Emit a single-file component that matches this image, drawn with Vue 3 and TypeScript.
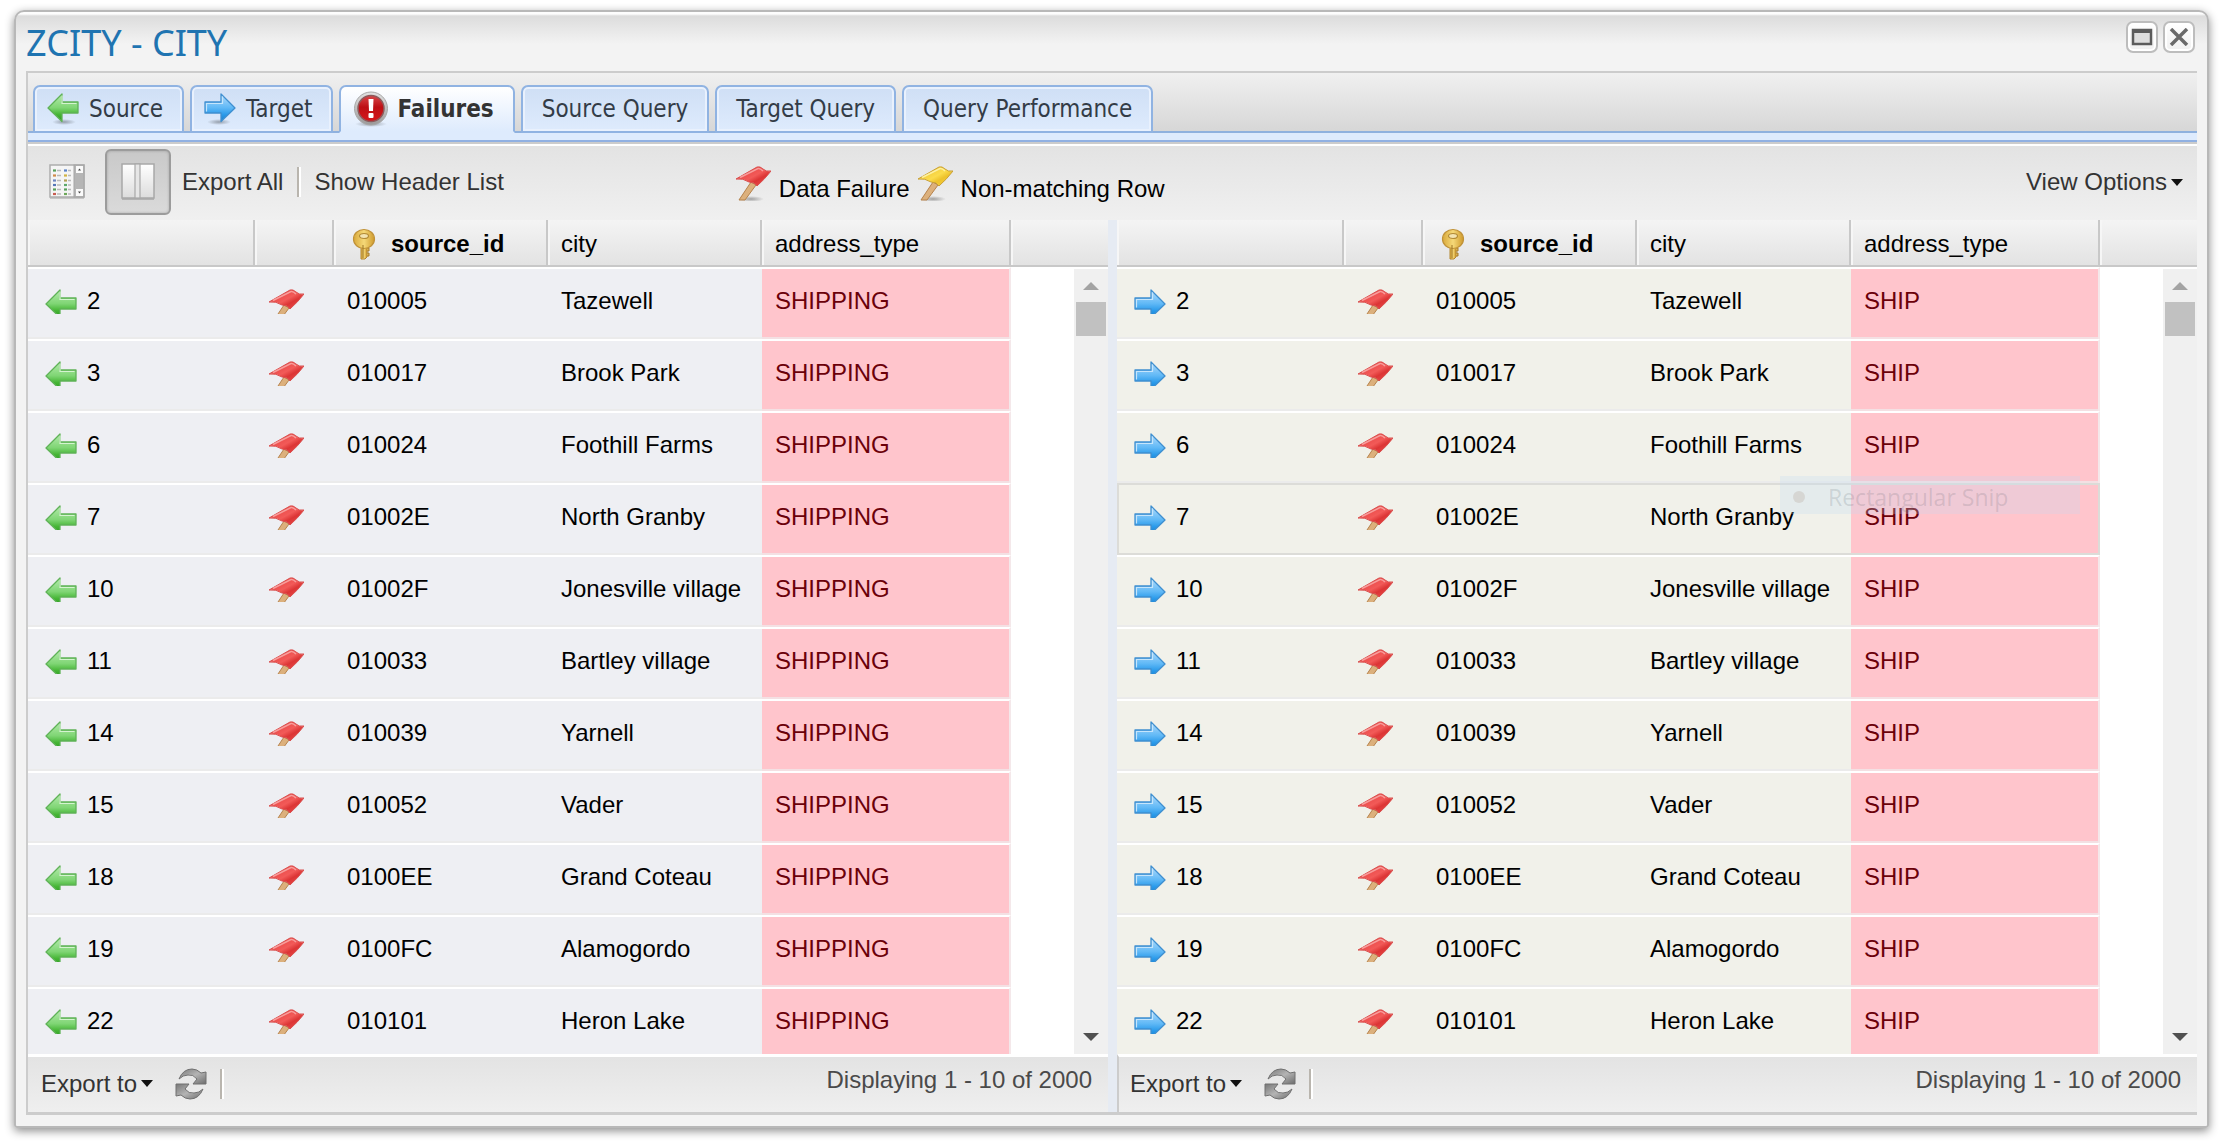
<script setup lang="ts">
import { ref } from 'vue'

interface Tab {
  label: string
  icon?: string
}

interface Row {
  line: number
  id: string
  city: string
}

interface Side {
  key: 'source' | 'target'
  icon: string
  addressType: string
}

const tabs: Tab[] = [
  { label: 'Source', icon: 'arrow-left' },
  { label: 'Target', icon: 'arrow-right' },
  { label: 'Failures', icon: 'alert' },
  { label: 'Source Query' },
  { label: 'Target Query' },
  { label: 'Query Performance' },
]
const activeTab = ref('Failures')

const rows: Row[] = [
  { line: 2, id: '010005', city: 'Tazewell' },
  { line: 3, id: '010017', city: 'Brook Park' },
  { line: 6, id: '010024', city: 'Foothill Farms' },
  { line: 7, id: '01002E', city: 'North Granby' },
  { line: 10, id: '01002F', city: 'Jonesville village' },
  { line: 11, id: '010033', city: 'Bartley village' },
  { line: 14, id: '010039', city: 'Yarnell' },
  { line: 15, id: '010052', city: 'Vader' },
  { line: 18, id: '0100EE', city: 'Grand Coteau' },
  { line: 19, id: '0100FC', city: 'Alamogordo' },
  { line: 22, id: '010101', city: 'Heron Lake' },
]

const sides: Side[] = [
  { key: 'source', icon: 'arrow-left', addressType: 'SHIPPING' },
  { key: 'target', icon: 'arrow-right', addressType: 'SHIP' },
]

const focused = { side: 'target', line: 7 }
</script>

<template>
  <svg class="defs" aria-hidden="true">
    <defs>
      <linearGradient id="g-green" x1="0" y1="0" x2="0" y2="1">
        <stop offset="0" stop-color="#b5ebad" />
        <stop offset="0.5" stop-color="#7fd574" />
        <stop offset="0.75" stop-color="#45b534" />
        <stop offset="1" stop-color="#2f9a24" />
      </linearGradient>
      <linearGradient id="g-blue" x1="0" y1="0" x2="0" y2="1">
        <stop offset="0" stop-color="#b4dcfb" />
        <stop offset="0.5" stop-color="#5fb8f6" />
        <stop offset="0.75" stop-color="#2a9aea" />
        <stop offset="1" stop-color="#1c7fcb" />
      </linearGradient>
      <linearGradient id="g-red" x1="0" y1="0" x2="1" y2="1">
        <stop offset="0" stop-color="#e23a3a" />
        <stop offset="0.5" stop-color="#f25a58" />
        <stop offset="0.65" stop-color="#dc3535" />
        <stop offset="1" stop-color="#ee5552" />
      </linearGradient>
      <linearGradient id="g-yellow" x1="0" y1="0" x2="1" y2="1">
        <stop offset="0" stop-color="#e8b92a" />
        <stop offset="0.5" stop-color="#fbdc4c" />
        <stop offset="0.65" stop-color="#edc22c" />
        <stop offset="1" stop-color="#f6d040" />
      </linearGradient>
      <linearGradient id="g-ring" x1="0" y1="0" x2="0" y2="1">
        <stop offset="0" stop-color="#e2e2e2" />
        <stop offset="1" stop-color="#9a9a9a" />
      </linearGradient>
      <linearGradient id="g-disc" x1="0" y1="0" x2="0" y2="1">
        <stop offset="0" stop-color="#d8474a" />
        <stop offset="0.45" stop-color="#bd0f14" />
        <stop offset="1" stop-color="#d6161b" />
      </linearGradient>
      <linearGradient id="g-gold" x1="0" y1="0" x2="1" y2="0">
        <stop offset="0" stop-color="#d9a93a" />
        <stop offset="0.5" stop-color="#f5d878" />
        <stop offset="1" stop-color="#cf9a2c" />
      </linearGradient>
      <linearGradient id="g-pane" x1="0" y1="0" x2="0" y2="1">
        <stop offset="0" stop-color="#ffffff" />
        <stop offset="1" stop-color="#dcdcdc" />
      </linearGradient>
      <linearGradient id="g-steel" x1="0" y1="0" x2="1" y2="1">
        <stop offset="0" stop-color="#777777" />
        <stop offset="0.5" stop-color="#b4b4b4" />
        <stop offset="1" stop-color="#6c6c6c" />
      </linearGradient>
      <radialGradient id="g-shade">
        <stop offset="0" stop-color="#000000" stop-opacity="0.32" />
        <stop offset="1" stop-color="#000000" stop-opacity="0" />
      </radialGradient>
    </defs>

    <symbol id="arrow-left" viewBox="0 0 32 32">
      <ellipse cx="17" cy="29" rx="12" ry="3" fill="url(#g-shade)" />
      <path d="M1 15 15 1V9H31V20H15V28.500Z" fill="url(#g-green)" stroke="#5fb257" stroke-width="1.300" stroke-linejoin="round" />
      <path d="M15 2.500V10.500H29.500" fill="none" stroke="#d5f3d0" stroke-width="1.200" />
    </symbol>
    <symbol id="arrow-right" viewBox="0 0 32 32">
      <ellipse cx="15" cy="29" rx="12" ry="3" fill="url(#g-shade)" />
      <path d="M31 15 17 1V9H1V20H17V28.500Z" fill="url(#g-blue)" stroke="#3f8fd0" stroke-width="1.300" stroke-linejoin="round" />
      <path d="M2.500 18.500V10.500H18.500V3.500" fill="none" stroke="#c5e5fc" stroke-width="1.200" />
    </symbol>
    <symbol id="flag-red" viewBox="0 0 35 35">
      <ellipse cx="15" cy="33" rx="13" ry="3" fill="url(#g-shade)" />
      <path d="M15 16 20 19 9 34H3Z" fill="#dcb07c" stroke="#b5824c" stroke-width="1" />
      <path d="M0 13 21 1Q24 0 27 3T35 5Q29 13 21 20 19 16 13 16 7 12 0 13Z" fill="url(#g-red)" stroke="#d9504f" stroke-width="1" />
      <path d="M4 11.500 22 2.500Q24 2 27 5" fill="none" stroke="#f79d9b" stroke-width="1.400" />
    </symbol>
    <symbol id="flag-yellow" viewBox="0 0 35 35">
      <ellipse cx="15" cy="33" rx="13" ry="3" fill="url(#g-shade)" />
      <path d="M15 16 20 19 9 34H3Z" fill="#dcb07c" stroke="#b5824c" stroke-width="1" />
      <path d="M0 13 21 1Q24 0 27 3T35 5Q29 13 21 20 19 16 13 16 7 12 0 13Z" fill="url(#g-yellow)" stroke="#c9a035" stroke-width="1" />
      <path d="M4 11.500 22 2.500Q24 2 27 5" fill="none" stroke="#fdf0a0" stroke-width="1.400" />
    </symbol>
    <symbol id="alert" viewBox="0 0 36 36">
      <ellipse cx="18" cy="33" rx="16" ry="3" fill="url(#g-shade)" />
      <circle cx="18" cy="17.500" r="16.500" fill="url(#g-ring)" stroke="#a8a8a8" stroke-width="1" />
      <circle cx="18" cy="17.500" r="13" fill="url(#g-disc)" stroke="#8d5a5c" stroke-width="1.500" />
      <path d="M15.500 8H20.500L20 20H16Z" fill="#fff" />
      <rect x="15.500" y="22" width="5" height="5" rx="1" fill="#fff" />
    </symbol>
    <symbol id="key" viewBox="0 0 24 32">
      <path d="M9 15H15V29L13 31H9Z" fill="url(#g-gold)" stroke="#b28631" stroke-width="1" />
      <path d="M15 20H17V23H15M15 25H17V28H15" fill="#d9b050" stroke="#a57c2e" stroke-width="1" />
      <ellipse cx="12" cy="11" rx="10.500" ry="9.500" fill="url(#g-gold)" stroke="#c09238" stroke-width="1.200" />
      <ellipse cx="12" cy="8" rx="4.500" ry="2.500" fill="#f3e3b0" stroke="#b28a34" stroke-width="1.200" />
      <path d="M11 17V30" stroke="#9c7426" stroke-width="1" />
    </symbol>
    <symbol id="panes" viewBox="0 0 34 38">
      <rect x="1" y="3" width="32" height="34" fill="#8e8e8e" opacity="0.500" />
      <rect x="1" y="1" width="32" height="34" fill="url(#g-pane)" stroke="#a8a8a8" stroke-width="1.500" />
      <rect x="14" y="1" width="5" height="34" fill="#e6e6e6" stroke="#a8a8a8" stroke-width="1.200" />
    </symbol>
    <symbol id="list" viewBox="0 0 36 36">
      <rect x="1" y="3" width="34" height="32" fill="#8e8e8e" opacity="0.400" />
      <rect x="1" y="1" width="34" height="32" fill="#f5f5f5" stroke="#adadad" stroke-width="1.500" />
      <rect x="25" y="1" width="10" height="32" fill="#b5b5b5" stroke="#a5a5a5" />
      <rect x="27" y="2" width="7" height="7" fill="#fafafa" />
      <rect x="27" y="25" width="7" height="7" fill="#fafafa" />
      <path d="M29 6.500H32L30.500 4.500ZM29 27.500H32L30.500 29.500Z" fill="#444" />
      <g stroke-width="2.200">
        <path d="M4 6.500H7" stroke="#58a05a" /><path d="M15 6.500H18" stroke="#5b83c8" />
        <path d="M4 11.500H7" stroke="#d08a4a" /><path d="M15 11.500H18" stroke="#d2b443" />
        <path d="M4 16.500H7" stroke="#6e86c0" /><path d="M15 16.500H18" stroke="#b2a054" />
        <path d="M4 21H7" stroke="#5577b8" /><path d="M15 21H18" stroke="#5da86a" />
        <path d="M4 25.500H7" stroke="#58a05a" /><path d="M15 25.500H18" stroke="#58a05a" />
        <path d="M4 30H7" stroke="#c85c50" /><path d="M15 30H18" stroke="#6da85a" />
      </g>
      <path d="M8 6.500H12M8 11.500H12M8 16.500H12M8 21H12M8 25.500H12M8 30H12M19 6.500H22M19 11.500H22M19 16.500H22M19 21H22M19 25.500H22M19 30H22" stroke="#b9b9b9" stroke-width="1.500" />
    </symbol>
    <symbol id="refresh" viewBox="0 0 32 32">
      <path d="M4 11Q8 1 17 1 22 1 26 5L31 4V16H18L22 11Q18 6 13 7 8 7 4 11Z" fill="url(#g-steel)" stroke="#707070" stroke-width="1" />
      <path d="M28 21Q24 31 15 31 10 31 6 27L1 28V16H14L10 21Q14 26 19 25 24 25 28 21Z" fill="url(#g-steel)" stroke="#707070" stroke-width="1" />
    </symbol>
    <symbol id="maximize" viewBox="0 0 22 18">
      <rect x="2" y="2" width="18" height="14" fill="#dedede" stroke="#5c5c5c" stroke-width="2.500" />
      <path d="M1 3H21" stroke="#5c5c5c" stroke-width="4" />
    </symbol>
    <symbol id="close" viewBox="0 0 22 18">
      <path d="M3 1 19 17M19 1 3 17" stroke="#6a6a6a" stroke-width="3.500" />
    </symbol>
  </svg>

  <main class="window">
    <header class="title-bar">
      <h1>ZCITY - CITY</h1>
      <button class="tool" type="button" aria-label="Maximize"><svg><use href="#maximize" /></svg></button>
      <button class="tool" type="button" aria-label="Close"><svg><use href="#close" /></svg></button>
    </header>

    <div class="panel">
      <nav class="tabs" role="tablist">
        <button
          v-for="tab in tabs"
          :key="tab.label"
          class="tab"
          :class="{ active: tab.label === activeTab, 'with-icon': tab.icon }"
          type="button"
          role="tab"
          :aria-selected="tab.label === activeTab"
          @click="activeTab = tab.label"
        >
          <svg v-if="tab.icon" class="tab-icon"><use :href="'#' + tab.icon" /></svg>
          <span>{{ tab.label }}</span>
        </button>
      </nav>
      <div class="tab-strip"></div>

      <div class="toolbar">
        <button class="view-button" type="button" aria-label="List view"><svg><use href="#list" /></svg></button>
        <button class="view-button pressed" type="button" aria-label="Side by side view"><svg><use href="#panes" /></svg></button>
        <button class="text-button" type="button">Export All</button>
        <span class="separator"></span>
        <button class="text-button" type="button">Show Header List</button>
        <div class="legend">
          <svg class="flag"><use href="#flag-red" /></svg>
          <span>Data Failure</span>
          <svg class="flag"><use href="#flag-yellow" /></svg>
          <span>Non-matching Row</span>
        </div>
        <button class="text-button menu view-options" type="button">View Options<i class="caret"></i></button>
      </div>

      <div class="grids">
        <section v-for="side in sides" :key="side.key" class="grid" :class="side.key">
          <div class="grid-view">
            <table>
              <colgroup>
                <col class="c-line" />
                <col class="c-flag" />
                <col class="c-text" />
                <col class="c-text" />
                <col class="c-type" />
                <col />
              </colgroup>
              <thead>
                <tr>
                  <th></th>
                  <th></th>
                  <th class="key-column"><div><svg class="key"><use href="#key" /></svg>source_id</div></th>
                  <th>city</th>
                  <th>address_type</th>
                  <th></th>
                </tr>
              </thead>
              <tbody>
                <tr
                  v-for="row in rows"
                  :key="row.line"
                  :class="{ focused: side.key === focused.side && row.line === focused.line }"
                >
                  <td><div class="line"><span class="clip"><svg class="arrow"><use :href="'#' + side.icon" /></svg></span>{{ row.line }}</div></td>
                  <td><span class="clip"><svg class="flag"><use href="#flag-red" /></svg></span></td>
                  <td>{{ row.id }}</td>
                  <td>{{ row.city }}</td>
                  <td class="failed">{{ side.addressType }}</td>
                  <td class="filler"></td>
                </tr>
              </tbody>
            </table>
            <div class="scrollbar">
              <i class="up"></i>
              <i class="thumb"></i>
              <i class="down"></i>
            </div>
            <div v-if="side.key === 'target'" class="snip"><i></i>Rectangular Snip</div>
          </div>
          <footer class="paging">
            <button class="text-button menu" type="button">Export to<i class="caret"></i></button>
            <button class="refresh" type="button" aria-label="Refresh"><svg><use href="#refresh" /></svg></button>
            <span class="separator"></span>
            <span class="count">Displaying 1 - 10 of 2000</span>
          </footer>
        </section>
      </div>
    </div>
  </main>
</template>

<style>
body {
  margin: 0;
  background: #fff;
}
</style>

<style scoped>
* {
  box-sizing: border-box;
}
.defs {
  position: absolute;
  width: 0;
  height: 0;
}
.window {
  display: flow-root;
  margin: 10px 17px 13px 14px;
  padding: 0 10px 11px;
  border: 2px solid #b8b8b8;
  border-radius: 10px 10px 3px 3px;
  background: linear-gradient(#fdfdfd 0, #fdfdfd 2px, #dcdcdc 4px, #f3f3f3 32px, #f3f3f3);
  box-shadow: 0 3px 10px rgba(0, 0, 0, 0.45);
  font: 24px/28px "Liberation Sans", Arial, sans-serif;
  color: #000;
}
button {
  margin: 0;
  padding: 0;
  border: 0;
  background: none;
  font: inherit;
  color: #333;
  cursor: pointer;
}
.title-bar {
  display: flex;
  align-items: flex-start;
  gap: 5px;
  height: 59px;
  padding: 9px 2px 0 0;
}
h1 {
  flex: 1;
  margin: 0;
  font: 36px/44px "Noto Sans", Tahoma, sans-serif;
  color: #1f74b1;
}
.tool {
  width: 32px;
  height: 32px;
  border: 2px solid #bdbdbd;
  border-radius: 7px;
  background: linear-gradient(#fff, #f0f0f0);
  box-shadow: inset 0 0 0 2px #fff;
  display: flex;
  align-items: center;
  justify-content: center;
}
.tool svg {
  width: 22px;
  height: 18px;
}
.panel {
  border: solid #ccc;
  border-width: 2px 0 3px 2px;
}
.tabs {
  display: flex;
  gap: 6px;
  padding: 12px 0 0 5px;
  background: linear-gradient(#f0f0f0, #d6d6d6);
  box-shadow: inset 0 -2px #8fb1de;
}
.tab {
  display: flex;
  align-items: center;
  gap: 10px;
  height: 48px;
  padding: 0 19px;
  border: 2px solid #90b3e2;
  border-radius: 7px 7px 0 0;
  background: linear-gradient(#cfdff5, #deebfd);
  box-shadow: inset 0 0 0 2px #e9f1fd;
  font: 24px/28px "DejaVu Sans Condensed", Tahoma, sans-serif;
  color: #333c47;
  white-space: nowrap;
}
.with-icon {
  padding-left: 12px;
}
.tab.active {
  gap: 8px;
  border-bottom-color: #deebfd;
  background: linear-gradient(#fff, #deebfd);
  box-shadow: none;
  font-weight: bold;
  color: #333;
}
.tab-icon {
  width: 32px;
  height: 32px;
}
.active .tab-icon {
  width: 36px;
  height: 36px;
}
.tab-strip {
  height: 13px;
  background: linear-gradient(#deebfd 0, #deebfd 7px, #90b0e2 7px, #90b0e2 9px, #ccc 9px, #ccc 11px, #fff 11px);
}
.toolbar {
  display: flex;
  align-items: center;
  height: 74px;
  padding: 0 14px 2px 6px;
  background: linear-gradient(#e3e3e3, #f0f0f0);
}
.view-button {
  display: flex;
  align-items: center;
  justify-content: center;
  width: 66px;
  height: 66px;
}
.view-button svg {
  width: 36px;
  height: 36px;
}
.pressed {
  margin: 0 11px 0 5px;
  border: 2px solid #9c9c9c;
  border-radius: 6px;
  background: linear-gradient(#c9c9c9, #dadada);
  box-shadow: inset 0 0 3px rgba(0, 0, 0, 0.2);
}
.pressed svg {
  width: 34px;
  height: 38px;
}
.text-button {
  white-space: nowrap;
}
.separator {
  width: 4px;
  height: 30px;
  margin: 0 13px;
  border: solid;
  border-width: 0 2px;
  border-color: #b9b5ae #fff #fff #b9b5ae;
}
.toolbar .separator {
  margin-left: 14px;
}
.legend {
  display: flex;
  align-items: flex-end;
  gap: 8px;
  margin: 2px 0 0 232px;
  white-space: nowrap;
}
.legend span {
  line-height: 24px;
}
.flag {
  display: block;
  flex: none;
  width: 35px;
  height: 35px;
}
.view-options {
  margin-left: auto;
}
.menu {
  display: flex;
  align-items: center;
  gap: 4px;
}
.caret {
  border: solid transparent;
  border-width: 7px 6px 0;
  border-top-color: #111;
}
.grids {
  display: flex;
  gap: 9px;
  background: #e6ebf3;
}
.grid {
  flex: 1;
  min-width: 0;
}
.grid-view {
  position: relative;
  background: #fff;
}
table {
  width: 100%;
  table-layout: fixed;
  border-collapse: separate;
  border-spacing: 0;
}
.c-line {
  width: 227px;
}
.c-flag {
  width: 79px;
}
.c-text {
  width: 214px;
}
.c-type {
  width: 249px;
}
thead {
  background: linear-gradient(#f4f4f4, #e2e2e2);
}
th {
  height: 47px;
  padding: 2px 0 0 13px;
  border: solid #c8c8c8;
  border-width: 0 2px 2px 0;
  box-shadow: inset 2px 0 #f6f6f6, 0 2px #fff;
  font-weight: normal;
  text-align: left;
}
th:last-child {
  border-right: 0;
}
.key-column {
  padding-left: 18px;
  font-weight: bold;
}
.key-column div {
  display: flex;
  align-items: center;
  gap: 15px;
}
.key {
  width: 24px;
  height: 32px;
}
td {
  height: 72px;
  padding: 18px 0 0 13px;
  border-top: 2px solid #fff;
  box-shadow: inset 0 -2px #ebebeb;
  vertical-align: top;
  white-space: nowrap;
}
tbody tr:last-child td {
  height: 67px;
  box-shadow: none;
}
.source td {
  background: #eeeff3;
}
.target td {
  background: #f1f1ea;
}
td:first-child {
  padding-left: 17px;
}
td:nth-child(2) {
  padding-left: 14px;
}
.line {
  display: flex;
  gap: 10px;
}
.clip {
  display: block;
  height: 27px;
  padding-top: 2px;
  overflow: hidden;
}
.arrow {
  display: block;
  width: 32px;
  height: 32px;
}
tbody .failed {
  border-right: 2px solid #f4e8ea;
  background: #ffc5cc;
  box-shadow: inset 0 -2px #f4e0e3;
  color: #6b0009;
}
tbody .filler {
  background: #fff;
  box-shadow: none;
}
.focused td:not(.filler) {
  border-top-color: #dcdcd8;
  box-shadow: inset 0 -2px #dcdcd8;
}
.focused td:first-child {
  border-left: 2px solid #dcdcd8;
  padding-left: 15px;
}
.focused .failed {
  border-right-color: #dcdcd8;
}
.scrollbar {
  position: absolute;
  top: 49px;
  right: 0;
  bottom: 0;
  width: 34px;
  background: #f0f0f0;
  display: flex;
  flex-direction: column;
  align-items: center;
  padding: 13px 0;
}
.up {
  border: solid transparent;
  border-width: 0 8px 8px;
  border-bottom-color: #a3a3a3;
}
.thumb {
  width: 30px;
  height: 34px;
  margin: 12px 0 auto;
  background: #c1c1c1;
}
.down {
  border: solid transparent;
  border-width: 8px 8px 0;
  border-top-color: #505050;
}
.snip {
  position: absolute;
  top: 256px;
  left: 663px;
  width: 300px;
  height: 38px;
  padding: 4px 0 0 13px;
  display: flex;
  gap: 23px;
  background: rgba(190, 220, 245, 0.25);
  font: 23px/34px "Open Sans", "Noto Sans", sans-serif;
  color: rgba(80, 90, 100, 0.18);
  white-space: nowrap;
}
.snip i {
  width: 12px;
  height: 12px;
  margin-top: 11px;
  border-radius: 6px;
  background: rgba(150, 120, 100, 0.18);
}
.paging {
  display: flex;
  align-items: center;
  height: 58px;
  padding: 0 16px 2px 13px;
  border-top: 3px solid #fff;
  background: linear-gradient(#e3e3e3, #efefef);
}
.target .paging {
  border-left: 2px solid #ccc;
  padding-left: 11px;
}
.refresh {
  width: 32px;
  height: 32px;
  margin-left: 22px;
}
.refresh svg {
  display: block;
  width: 32px;
  height: 32px;
}
.count {
  margin: 0 0 8px auto;
  color: #4a4a4a;
  white-space: nowrap;
}
</style>
